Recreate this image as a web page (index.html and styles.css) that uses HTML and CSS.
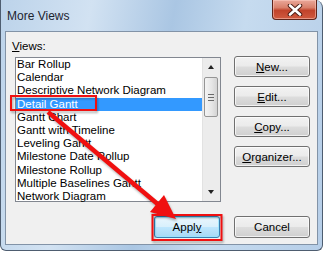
FILE: index.html
```html
<!DOCTYPE html>
<html lang="en">
<head>
    <meta charset="UTF-8" />
    <title>More Views</title>
    <link rel="stylesheet" href="styles.css">
</head>
<body>
    <div class="window">
        <div class="titlebar">
            <span class="title">More Views</span>
            <div class="close">
                <svg width="20" height="12" viewBox="0 0 20 12">
                    <path d="M5 1.5 L15 10.5 M15 1.5 L5 10.5" stroke="#4a1c14" stroke-width="4.5" stroke-linecap="round" />
                    <path d="M5 1.5 L15 10.5 M15 1.5 L5 10.5" stroke="#ffffff" stroke-width="2.6" stroke-linecap="round" />
                </svg>
            </div>
        </div>
        <div class="client">
            <div class="main">
                <div class="views">
                    <div class="label"><u>V</u>iews:</div>
                    <div class="listbox">
                        <ul class="items">
                            <li>Bar Rollup</li>
                            <li>Calendar</li>
                            <li>Descriptive Network Diagram</li>
                            <li class="selected">Detail Gantt</li>
                            <li>Gantt Chart</li>
                            <li>Gantt with Timeline</li>
                            <li>Leveling Gantt</li>
                            <li>Milestone Date Rollup</li>
                            <li>Milestone Rollup</li>
                            <li>Multiple Baselines Gantt</li>
                            <li>Network Diagram</li>
                        </ul>
                        <div class="scrollbar">
                            <span class="arrow up"></span>
                            <div class="thumb"><span class="grip"></span></div>
                            <span class="arrow down"></span>
                        </div>
                    </div>
                </div>
                <div class="side-buttons">
                    <button class="btn"><u>N</u>ew...</button>
                    <button class="btn"><u>E</u>dit...</button>
                    <button class="btn"><u>C</u>opy...</button>
                    <button class="btn"><u>O</u>rganizer...</button>
                </div>
            </div>
            <div class="footer">
                <button class="btn apply">Appl<u>y</u></button>
                <button class="btn">Cancel</button>
            </div>
        </div>
    </div>

    <!-- annotation layer -->
    <svg class="marks" width="327" height="254" viewBox="0 0 327 254">
        <g class="mark">
            <rect x="11" y="96" width="85" height="14" fill="none" stroke="#f01010" stroke-width="2" />
            <rect x="152.5" y="215" width="69" height="25" fill="none" stroke="#f01010" stroke-width="2" />
            <line x1="48" y1="112" x2="160" y2="206" stroke="#f01010" stroke-width="4.5" />
            <polygon points="176,219 150,212 164,195" fill="#f01010" />
        </g>
    </svg>
</body>
</html>
```

FILE: styles.css
```css
body {
    margin: 0;
    background: #ffffff;
    font-family: 'Liberation Sans', Arial, sans-serif;
    font-size: 11.5px;
    color: #000;
    position: relative;
}
.window {
    width: 323px;
    height: 251px;
    border: 1px solid #4e5d70;
    border-top: none;
    border-radius: 0 8px 6px 6px;
    background: linear-gradient(100deg, #bcd3ea 0%, #d2e2f2 25%, #aac6e3 48%, #c6dbef 68%, #b6cee8 100%);
    padding: 0 4px 5px 4px;
    box-sizing: border-box;
    display: flex;
    flex-direction: column;
}
.titlebar {
    height: 31px;
    display: flex;
    justify-content: space-between;
    align-items: flex-start;
    flex: none;
}
.title {
    margin: 9px 0 0 2px;
    font-size: 12px;
    color: #1c2430;
}
.close {
    width: 45px;
    height: 20px;
    margin-right: 1px;
    border: 1px solid #5e241a;
    border-top: none;
    border-radius: 0 0 4px 4px;
    background: linear-gradient(#eaa89a 0%, #d9806b 40%, #c1432b 55%, #d05a3f 100%);
    box-shadow: inset 0 0 0 1px rgba(255, 210, 200, 0.5);
    display: flex;
    align-items: center;
    justify-content: center;
    box-sizing: border-box;
}
.client {
    flex: 1;
    background: #f0f0f0;
    border: 1px solid #8293a7;
    padding: 7px 7px 0 6px;
}
.main {
    display: flex;
}
.label {
    height: 15px;
    line-height: 15px;
    margin-bottom: 3px;
}
.listbox {
    margin-left: 3px;
    width: 206px;
    height: 145px;
    border: 1px solid #828790;
    background: #fff;
    box-sizing: border-box;
    display: flex;
}
.items {
    list-style: none;
    margin: 0;
    padding: 0;
    flex: 1;
}
.items li {
    height: 13.2px;
    line-height: 13.2px;
    padding-left: 1px;
    white-space: nowrap;
}
.items li.selected {
    background: #3399ff;
    color: #fff;
}
.scrollbar {
    width: 17px;
    background: #ececec;
    border-left: 1px solid #e2e2e2;
    position: relative;
}
.arrow {
    position: absolute;
    left: 5px;
    width: 0;
    height: 0;
    border-left: 3.5px solid transparent;
    border-right: 3.5px solid transparent;
}
.arrow.up {
    top: 7px;
    border-bottom: 4px solid #222;
}
.arrow.down {
    bottom: 7px;
    border-top: 4px solid #222;
}
.thumb {
    margin: 19px 0 0 1px;
    width: 14px;
    height: 40px;
    border: 1px solid #959595;
    border-radius: 2px;
    box-sizing: border-box;
    background: linear-gradient(to right, #f4f4f4, #e6e6e6 55%, #d4d4d4);
    display: flex;
    align-items: center;
    justify-content: center;
}
.grip {
    width: 6px;
    height: 5px;
    border-top: 1px solid #6a6a6a;
    border-bottom: 1px solid #6a6a6a;
    position: relative;
}
.grip::after {
    content: '';
    position: absolute;
    left: 0;
    right: 0;
    top: 2px;
    border-top: 1px solid #6a6a6a;
}
.side-buttons {
    margin-left: 13px;
    margin-top: 17px;
    display: flex;
    flex-direction: column;
    gap: 9px;
}
.btn {
    width: 76px;
    height: 21px;
    padding: 0;
    font-family: inherit;
    font-size: 11.5px;
    color: #000;
    border: 1px solid #707070;
    border-radius: 3px;
    background: linear-gradient(#f2f2f2 0%, #ebebeb 48%, #dddddd 52%, #cfcfcf 100%);
    box-shadow: inset 0 0 0 1px rgba(255, 255, 255, 0.7);
}
.footer {
    display: flex;
    justify-content: flex-end;
    gap: 14px;
    margin-top: 14px;
}
.footer .btn {
    height: 22px;
}
.footer .apply {
    width: 66px;
    border-color: #3c7fb1;
    background: linear-gradient(#eaf6fd 0%, #d9f0fc 48%, #bee6fd 52%, #a7d9f5 100%);
    box-shadow: inset 0 0 0 1px rgba(150, 230, 255, 0.8);
}
.marks {
    position: absolute;
    left: 0;
    top: 0;
}
.mark {
    filter: drop-shadow(1px 2px 1px rgba(0, 0, 0, 0.3));
}
```
